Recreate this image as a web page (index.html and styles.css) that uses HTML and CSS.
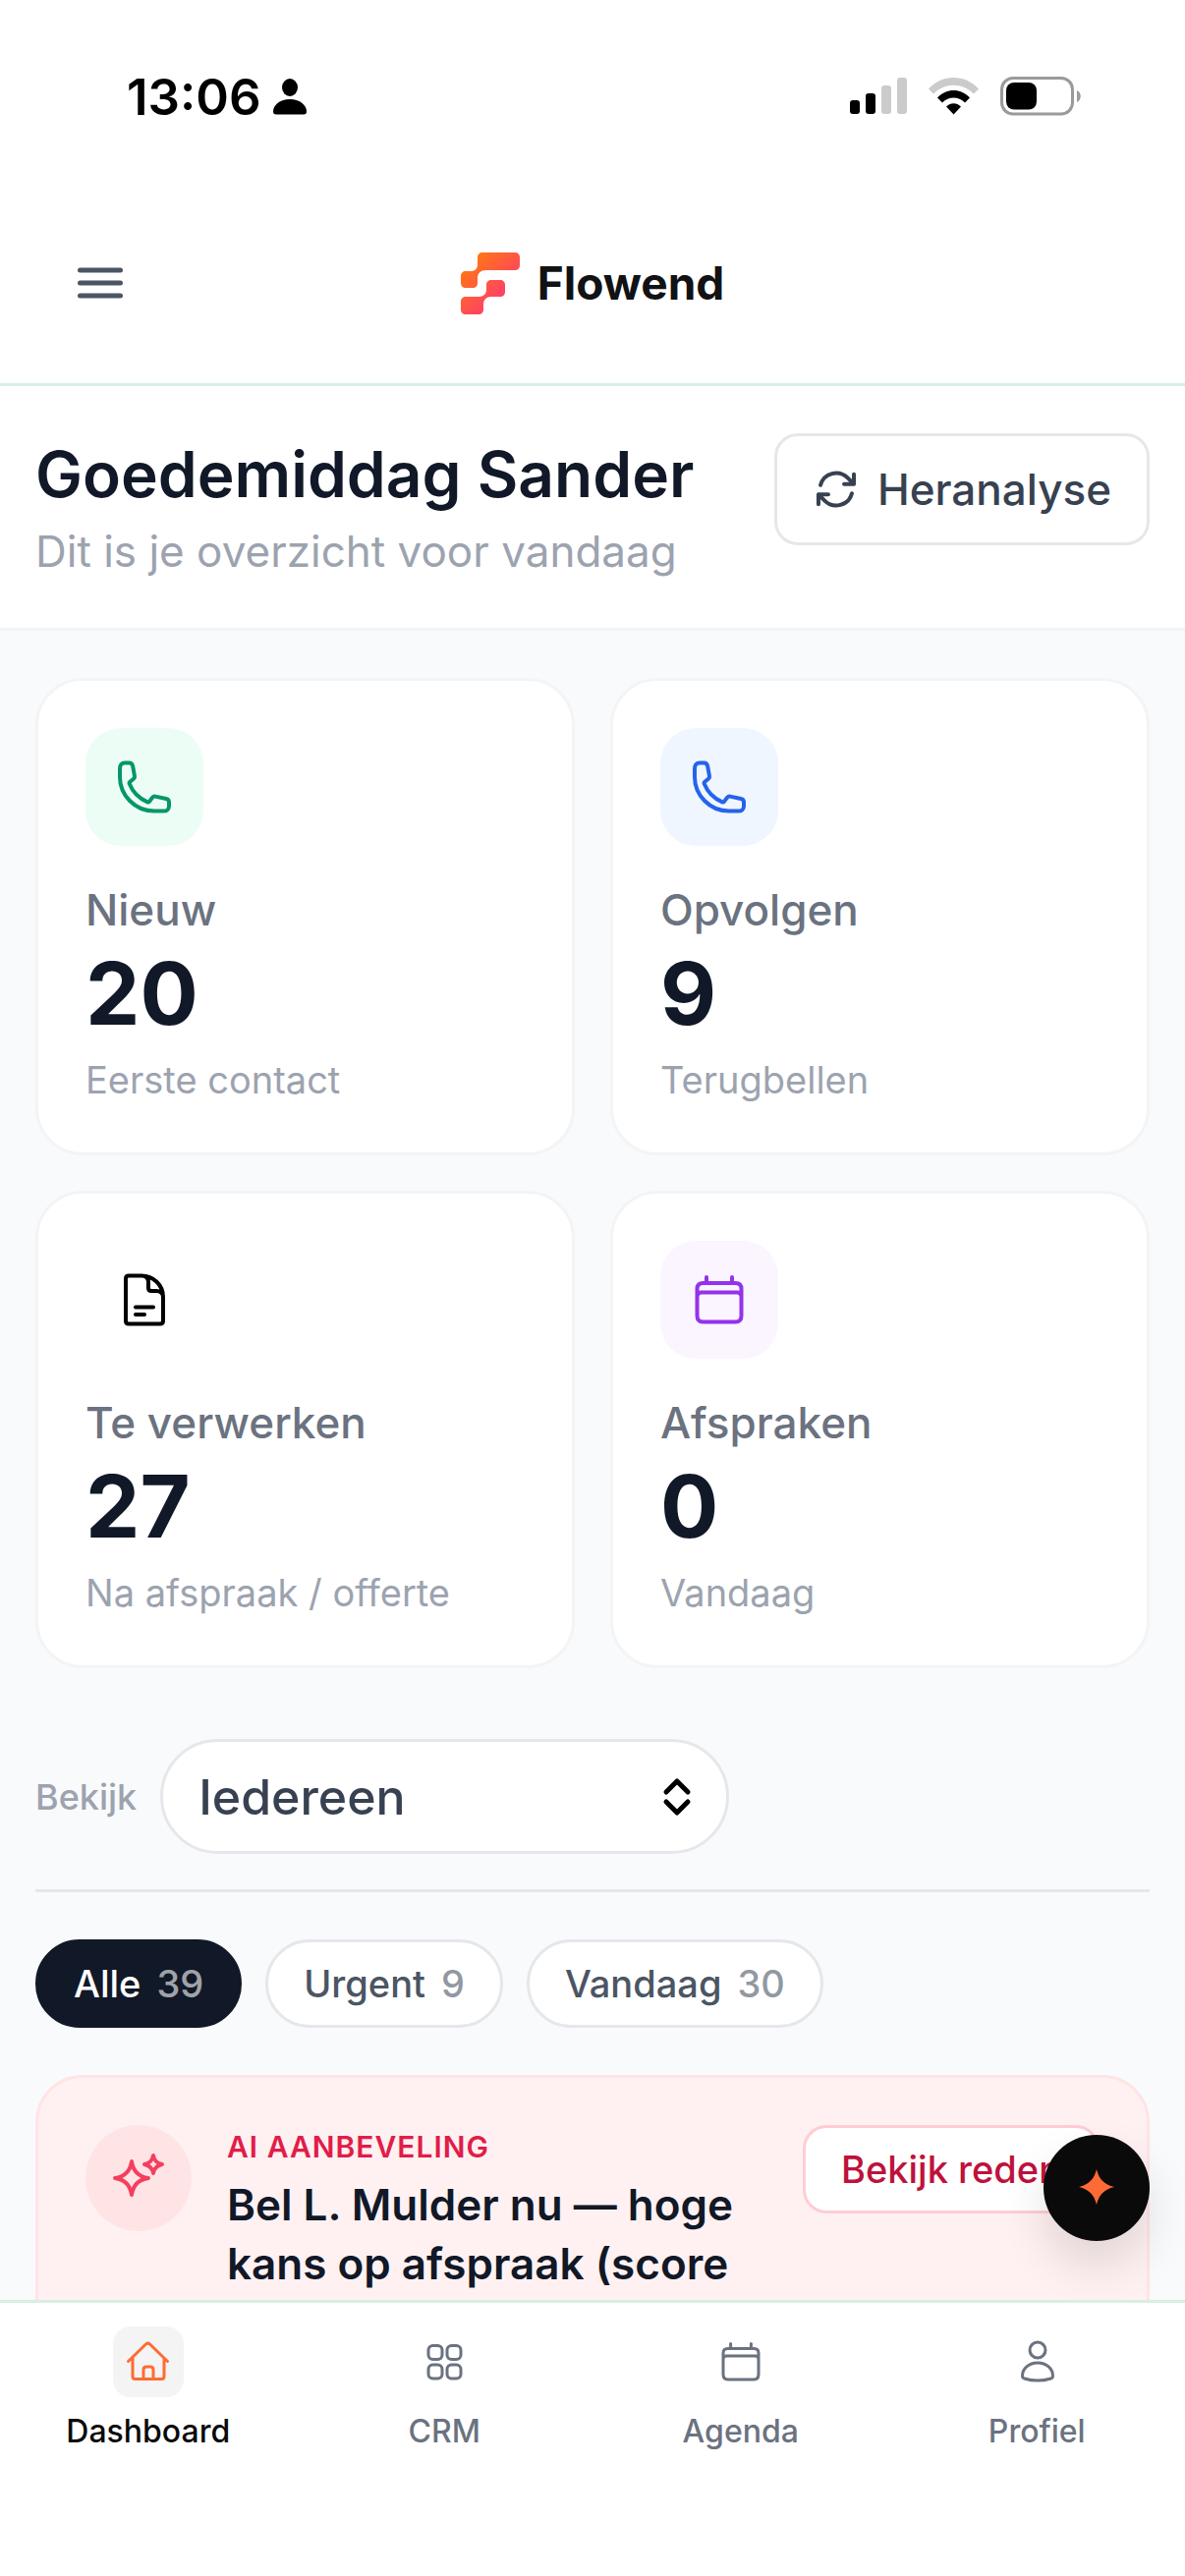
FILE: index.html
```html
<!DOCTYPE html>
<html lang="nl">
<head>
    <meta charset="UTF-8">
    <meta name="viewport" content="width=device-width, initial-scale=1.0">
    <title>Flowend</title>
    <link rel="stylesheet" href="styles.css">
</head>
<body>
    <div class="statusbar">
        <div class="clock">
            <span>13:06</span>
            <svg width="34" height="37" viewBox="0 0 34 37">
                <ellipse cx="17" cy="9" rx="8" ry="9"/>
                <path d="M17 21c10 0 17 6 17 12.500c0 2-1 3-3 3H3c-2 0-3-1-3-3C0 27 7 21 17 21z"/>
            </svg>
        </div>
        <div class="signals">
            <svg width="58" height="38" viewBox="0 0 58 38">
                <rect x="0" y="23" width="10" height="14" rx="3"/>
                <rect x="16" y="16" width="10" height="21" rx="3"/>
                <rect x="32" y="8" width="10" height="29" rx="3" fill="#cbcbcb"/>
                <rect x="48" y="0" width="10" height="37" rx="3" fill="#cbcbcb"/>
            </svg>
            <svg width="51" height="38" viewBox="0 0 51 38">
                <path d="M0 11.500C14-3.800 37-3.800 51 11.500L46 16.500C34.500 4.800 16.500 4.800 5 16.500z" fill="#cbcbcb"/>
                <path d="M9 20.500C18 10.500 33 10.500 42 20.500L37 25.500C30.500 18.800 20.500 18.800 14 25.500z"/>
                <path d="M18 29.500c4.300-4.500 10.700-4.500 15 0L25.500 37.500z"/>
            </svg>
            <svg width="82" height="40" viewBox="0 0 82 40">
                <rect x="1.500" y="1.500" width="72" height="36.500" rx="11.500" fill="none" stroke="#9a9a9a" stroke-width="3"/>
                <rect x="6" y="6" width="31" height="27.500" rx="8"/>
                <path d="M78 14c5 2 5 10 0 12z" fill="#9a9a9a"/>
            </svg>
        </div>
    </div>

    <header>
        <button class="menu" aria-label="Menu">
            <svg width="48" height="48" viewBox="0 0 48 48">
                <path d="M3.500 11h41M3.500 24h41M3.500 37h41"/>
            </svg>
        </button>
        <a href="/" class="logo">
            <svg width="60" height="63" viewBox="0 0 60 63">
                <defs>
                    <linearGradient id="flow" x1="0" y1="0" x2="60" y2="63" gradientUnits="userSpaceOnUse">
                        <stop offset="0.15" stop-color="#ff7614"/>
                        <stop offset="0.7" stop-color="#ff4166"/>
                    </linearGradient>
                </defs>
                <path fill="url(#flow)" d="M22 0h33c3 0 5 2 5 5v8c0 3-2 5-5 5H26c-6 0-9 3-9 8v5c0 3-2 5-5 5H5c-3 0-5-2-5-5v-7c0-3 2-5 5-5h6c3 0 6-3 6-6V5c0-3 2-5 5-5z"/>
                <path fill="url(#flow)" d="M31 28h9c3 0 5 2 5 5v7c0 3-2 5-5 5h-9c-5 0-8 3-8 8v5c0 3-2 5-5 5H5c-3 0-5-2-5-5v-8c0-3 2-5 5-5h14c4 0 7-3 7-7v-5c0-3 2-5 5-5z"/>
            </svg>
            <span>Flowend</span>
        </a>
    </header>

    <main>
        <section class="hero">
            <div class="greeting">
                <h1>Goedemiddag Sander</h1>
                <p>Dit is je overzicht voor vandaag</p>
            </div>
            <button class="reload">
                <svg width="48" height="48" viewBox="0 0 24 24">
                    <path d="M16.023 9.348h4.992v-.001M2.985 19.644v-4.992m0 0h4.992m-4.993 0 3.181 3.183a8.250 8.250 0 0 0 13.803-3.700M4.031 9.865a8.250 8.250 0 0 1 13.803-3.700l3.181 3.182m0-4.991v4.990"/>
                </svg>
                Heranalyse
            </button>
        </section>

        <div class="content">
            <section class="cards">
                <article class="card">
                    <div class="icon green">
                        <svg width="60" height="60" viewBox="0 0 60 60">
                            <path d="M10 5.500h4.500c2 0 3.200 1.200 3.600 3.200L20 19c.2 1-.1 1.800-.8 2.400l-4.200 3.600c-.5.5-.6 1-.4 1.600C18 35 25 42 33 45.400c.8.3 1.400.1 1.900-.5l3.400-4.300c.7-.9 1.600-1.200 2.600-1L52 42c2 .4 3 1.600 3 3.600v3.800c0 3.200-2.200 5.200-5.400 5.200H40C20 54.500 5 38 5 20v-9c0-3.200 1.800-5.500 5-5.500z"/>
                        </svg>
                    </div>
                    <h2>Nieuw</h2>
                    <strong>20</strong>
                    <p>Eerste contact</p>
                </article>
                <article class="card">
                    <div class="icon blue">
                        <svg width="60" height="60" viewBox="0 0 60 60">
                            <path d="M10 5.500h4.500c2 0 3.200 1.200 3.600 3.200L20 19c.2 1-.1 1.800-.8 2.400l-4.200 3.600c-.5.5-.6 1-.4 1.600C18 35 25 42 33 45.400c.8.3 1.400.1 1.900-.5l3.400-4.300c.7-.9 1.600-1.200 2.600-1L52 42c2 .4 3 1.600 3 3.600v3.800c0 3.200-2.200 5.200-5.400 5.200H40C20 54.500 5 38 5 20v-9c0-3.200 1.800-5.500 5-5.500z"/>
                        </svg>
                    </div>
                    <h2>Opvolgen</h2>
                    <strong>9</strong>
                    <p>Terugbellen</p>
                </article>
                <article class="card">
                    <div class="icon">
                        <svg width="60" height="60" viewBox="0 0 60 60">
                            <path d="M27 5.500H14c-2 0-3 1-3 3v43c0 2 1 3 3 3h32c2 0 3-1 3-3V27C49 15 39 5.500 27 5.500zc4 0 7 2.500 7 6.500v6c0 2 1 3 3 3h5c4 0 7 2.500 7 6.500M21 37.500h18M21 45h9"/>
                        </svg>
                    </div>
                    <h2>Te verwerken</h2>
                    <strong>27</strong>
                    <p>Na afspraak / offerte</p>
                </article>
                <article class="card">
                    <div class="icon purple">
                        <svg width="60" height="60" viewBox="0 0 60 60">
                            <path d="M17 7v6M43 7v6M13.500 13h33c4 0 6 2 6 6v27c0 4-2 6.500-6 6.500h-33c-4 0-6-2.500-6-6.500V19c0-4 2-6 6-6zM7.500 27c0-3 1-4.500 4-4.500h37c3 0 4 1.500 4 4.500"/>
                        </svg>
                    </div>
                    <h2>Afspraken</h2>
                    <strong>0</strong>
                    <p>Vandaag</p>
                </article>
            </section>

            <section class="view">
                <label for="who">Bekijk</label>
                <div class="select">
                    <select id="who" name="who">
                        <option>Iedereen</option>
                    </select>
                    <svg width="30" height="42" viewBox="0 0 30 42">
                        <path d="M4 16L15 5L26 16M4 26L15 37L26 26"/>
                    </svg>
                </div>
            </section>

            <nav class="filters">
                <button class="active">Alle <span>39</span></button>
                <button>Urgent <span>9</span></button>
                <button>Vandaag <span>30</span></button>
            </nav>

            <section class="advice">
                <div class="spark">
                    <svg width="54" height="54" viewBox="0 0 54 54">
                        <path d="M20 10c1.500 10 6.500 15.500 17 17c-10.500 1.500-15.500 7-17 17c-1.500-10-6.500-15.500-17-17c10.500-1.500 15.500-7 17-17zM42 4c1 5.500 3.500 8 9 9c-5.500 1-8 3.500-9 9c-1-5.500-3.500-8-9-9c5.500-1 8-3.500 9-9z"/>
                    </svg>
                </div>
                <div class="advice-text">
                    <h3>AI aanbeveling</h3>
                    <p>Bel L. Mulder nu — hoge kans op afspraak (score</p>
                </div>
                <button class="reason">Bekijk reden</button>
            </section>
        </div>
    </main>

    <button class="assistant" aria-label="Assistent">
        <svg width="36" height="40" viewBox="0 0 36 40">
            <path d="M18 1c2.500 10 7.500 15.500 18 18c-10.500 2.500-15.500 8-18 18c-2.500-10-7.500-15.500-18-18c10.500-2.500 15.500-8 18-18z"/>
        </svg>
    </button>

    <nav class="tabs">
        <a href="/dashboard" class="active">
            <span class="tab-icon">
                <svg width="48" height="48" viewBox="0 0 48 48">
                    <path d="M3.500 23.500L21.500 6c1.300-1.200 2.700-1.200 4 0L43.500 23.500M8 20v19c0 1.500.8 2.500 2.500 2.500h27c1.700 0 2.500-1 2.500-2.500V20M19 41.500V32c0-2 1-3 3-3h4c2 0 3 1 3 3v9.500"/>
                </svg>
            </span>
            Dashboard
        </a>
        <a href="/crm">
            <span class="tab-icon">
                <svg width="48" height="48" viewBox="0 0 48 48">
                    <rect x="8" y="7.500" width="14" height="14" rx="4.500"/>
                    <rect x="27" y="7.500" width="14" height="14" rx="4.500"/>
                    <rect x="8" y="27" width="14" height="14" rx="4.500"/>
                    <rect x="27" y="27" width="14" height="14" rx="4.500"/>
                </svg>
            </span>
            CRM
        </a>
        <a href="/agenda">
            <span class="tab-icon">
                <svg width="48" height="48" viewBox="0 0 60 60">
                    <path d="M17 7v6M43 7v6M13.500 13h33c4 0 6 2 6 6v27c0 4-2 6.500-6 6.500h-33c-4 0-6-2.500-6-6.500V19c0-4 2-6 6-6zM7.500 27c0-3 1-4.500 4-4.500h37c3 0 4 1.500 4 4.500"/>
                </svg>
            </span>
            Agenda
        </a>
        <a href="/profiel">
            <span class="tab-icon">
                <svg width="48" height="48" viewBox="0 0 48 48">
                    <circle cx="25" cy="12" r="8"/>
                    <path d="M25 25c9 0 15.500 6 15.500 13.500c0 1.500-.5 2-2 2.500c-8 2.500-19 2.500-27 0c-1.500-.5-2-1-2-2.500C9.500 31 16 25 25 25z"/>
                </svg>
            </span>
            Profiel
        </a>
    </nav>
</body>
</html>
```
FILE: styles.css
```css
* {
    box-sizing: border-box;
}
body {
    margin: 0;
    height: 100vh;
    display: flex;
    flex-direction: column;
    position: relative;
    font-family: Inter, "Noto Sans", sans-serif;
    background-color: #fff;
    color: #111827;
}
h1, h2, h3, p {
    margin: 0;
}
a {
    text-decoration: none;
    color: inherit;
}
button, select {
    font-family: inherit;
    margin: 0;
    cursor: pointer;
}
svg {
    display: block;
    flex-shrink: 0;
}

/* status bar */
.statusbar {
    height: 186px;
    padding: 10px 106px 0 129px;
    display: flex;
    justify-content: space-between;
    align-items: center;
    color: #000;
}
.clock {
    display: flex;
    align-items: center;
    gap: 12px;
    font-size: 51px;
    font-weight: 600;
}
.signals {
    display: flex;
    align-items: center;
    gap: 22px;
}

header {
    height: 207px;
    display: flex;
    justify-content: center;
    align-items: center;
    position: relative;
    border-bottom: 3px solid #d8efe2;
}
.menu {
    position: absolute;
    left: 54px;
    padding: 24px;
    border: none;
    background: none;
}
.menu svg {
    fill: none;
    stroke: #4b5563;
    stroke-width: 5;
    stroke-linecap: round;
}
.logo {
    display: flex;
    align-items: center;
    gap: 18px;
    font-size: 46px;
    font-weight: 700;
    color: #111214;
}

main {
    flex: 1;
    min-height: 0;
    overflow: hidden;
    background-color: #f9fafb;
}
.hero {
    padding: 48px 36px;
    display: flex;
    justify-content: space-between;
    align-items: flex-start;
    background-color: #fff;
    border-bottom: 3px solid #f3f4f6;
}
h1 {
    font-size: 64px;
    line-height: 84px;
    font-weight: 600;
}
.greeting p {
    margin-top: 6px;
    font-size: 44px;
    line-height: 60px;
    color: #9ca3af;
}
.reload {
    height: 114px;
    padding: 0 36px;
    display: flex;
    align-items: center;
    gap: 18px;
    border: 3px solid #e5e7eb;
    border-radius: 24px;
    background-color: #fff;
    font-size: 44px;
    font-weight: 500;
    color: #374151;
}
.reload svg {
    fill: none;
    stroke: #374151;
    stroke-width: 2;
    stroke-linecap: round;
    stroke-linejoin: round;
}

.content {
    padding: 48px 36px;
}
.cards {
    display: grid;
    grid-template-columns: 1fr 1fr;
    gap: 36px;
}
.card {
    padding: 48px;
    background-color: #fff;
    border: 3px solid #f3f4f6;
    border-radius: 48px;
}
.icon {
    width: 120px;
    height: 120px;
    margin-bottom: 34px;
    display: flex;
    justify-content: center;
    align-items: center;
    border-radius: 36px;
    color: #000;
}
.icon svg {
    fill: none;
    stroke: currentColor;
    stroke-width: 4;
    stroke-linecap: round;
    stroke-linejoin: round;
}
.green {
    background-color: #ecfdf5;
    color: #059669;
}
.blue {
    background-color: #eff6ff;
    color: #2563eb;
}
.purple {
    background-color: #faf5ff;
    color: #9333ea;
}
.card h2 {
    font-size: 44px;
    line-height: 63px;
    font-weight: 500;
    color: #6b7280;
}
.card strong {
    display: block;
    margin: 8px 0 17px;
    font-size: 88px;
    line-height: 90px;
    font-weight: 700;
}
.card p {
    font-size: 38px;
    line-height: 52px;
    color: #9ca3af;
}

.view {
    margin-top: 72px;
    padding-bottom: 36px;
    display: flex;
    align-items: center;
    gap: 24px;
    border-bottom: 3px solid #e5e7eb;
}
.view label {
    font-size: 36px;
    font-weight: 500;
    color: #9ca3af;
}
.select {
    position: relative;
}
.select select {
    appearance: none;
    width: 579px;
    height: 117px;
    padding: 0 36px;
    border: 3px solid #e5e7eb;
    border-radius: 60px;
    background-color: #fff;
    font-size: 50px;
    font-weight: 500;
    color: #374151;
}
.select svg {
    position: absolute;
    right: 38px;
    top: 38px;
    fill: none;
    stroke: #000;
    stroke-width: 5;
    stroke-linecap: round;
    stroke-linejoin: round;
    pointer-events: none;
}

.filters {
    margin: 48px 0;
    display: flex;
    gap: 24px;
}
.filters button {
    height: 90px;
    padding: 0 36px;
    display: flex;
    align-items: center;
    gap: 16px;
    border: 3px solid #e5e7eb;
    border-radius: 45px;
    background-color: #fff;
    font-size: 38px;
    font-weight: 500;
    color: #4b5563;
}
.filters span {
    opacity: 0.6;
}
.filters .active {
    background-color: #111827;
    border-color: #111827;
    color: #fff;
}

/* AI card */
.advice {
    padding: 48px;
    display: flex;
    align-items: flex-start;
    gap: 36px;
    background-color: #fff1f2;
    border: 3px solid #ffe4e6;
    border-radius: 48px;
}
.spark {
    width: 108px;
    height: 108px;
    display: flex;
    flex-shrink: 0;
    justify-content: center;
    align-items: center;
    border-radius: 50%;
    background-color: #ffe4e6;
}
.spark svg {
    fill: none;
    stroke: #f43f5e;
    stroke-width: 4;
    stroke-linejoin: round;
}
.advice-text {
    flex: 1;
}
.advice h3 {
    font-size: 30px;
    line-height: 45px;
    font-weight: 600;
    letter-spacing: 1px;
    text-transform: uppercase;
    color: #e11d48;
}
.advice p {
    margin-top: 6px;
    font-size: 44px;
    line-height: 60px;
    font-weight: 600;
}
.reason {
    height: 90px;
    padding: 0 36px;
    border: 3px solid #fecdd3;
    border-radius: 24px;
    background-color: #fff;
    font-size: 38px;
    font-weight: 500;
    color: #be123c;
}
.assistant {
    position: absolute;
    right: 36px;
    bottom: 341px;
    width: 108px;
    height: 108px;
    padding: 0;
    display: flex;
    justify-content: center;
    align-items: center;
    border: none;
    border-radius: 50%;
    background-color: #0a0a0a;
    box-shadow: 0 24px 48px rgba(0, 0, 0, 0.12);
}
.assistant svg {
    fill: #ff6b35;
}

.tabs {
    height: 281px;
    padding-top: 24px;
    display: grid;
    grid-template-columns: repeat(4, 1fr);
    align-items: start;
    position: relative;
    background-color: #fff;
    border-top: 3px solid #d8efe2;
}
.tabs a {
    display: flex;
    flex-direction: column;
    align-items: center;
    gap: 12px;
    font-size: 32px;
    line-height: 45px;
    font-weight: 500;
    color: #6b7280;
}
.tab-icon {
    width: 72px;
    height: 72px;
    display: flex;
    justify-content: center;
    align-items: center;
    border-radius: 18px;
}
.tab-icon svg {
    fill: none;
    stroke: currentColor;
    stroke-width: 3;
    stroke-linecap: round;
    stroke-linejoin: round;
}
.tab-icon svg * {
    vector-effect: non-scaling-stroke;
}
.tabs .active {
    color: #0a0a0a;
}
.tabs .active .tab-icon {
    background-color: #f3f4f3;
    color: #ff6b35;
}
```
